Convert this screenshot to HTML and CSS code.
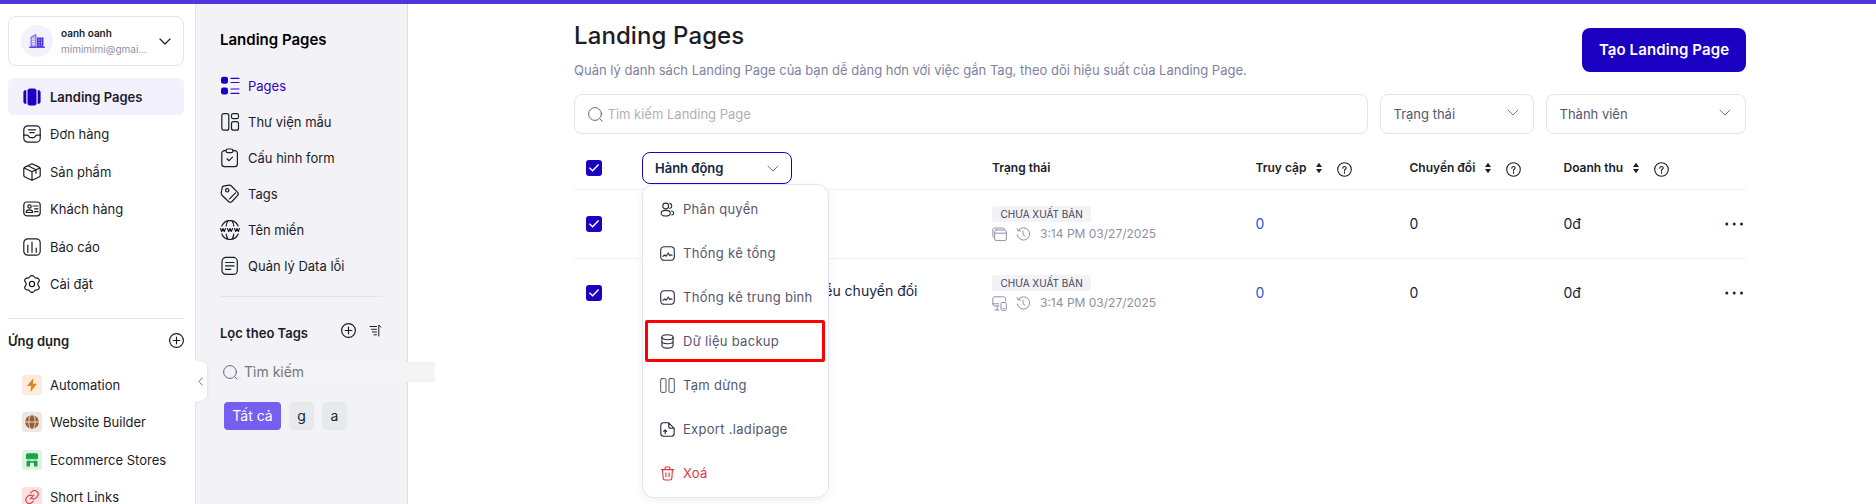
FILE: index.html
```html
<!DOCTYPE html>
<html lang="vi">
<head>
<meta charset="utf-8">
<title>Landing Pages</title>
<link rel="stylesheet" href="styles.css">
</head>
<body>
<svg class="defs" aria-hidden="true">
  <symbol id="plus" viewBox="0 0 15 15"><circle cx="7.5" cy="7.5" r="6.9"/><path d="M7.5 4.2v6.6M4.2 7.5h6.6"/></symbol>
  <symbol id="search" viewBox="0 0 15 15"><circle cx="7" cy="7" r="6.4"/><path d="M12.2 12.2l2 2"/></symbol>
  <symbol id="down" viewBox="0 0 12 7"><path d="M1 1l5 5 5-5"/></symbol>
  <symbol id="check" viewBox="0 0 16 16"><path d="M3.4 7.8l3.2 3 6-6.2"/></symbol>
  <symbol id="sort" viewBox="0 0 8 12"><path d="M4 .8L7 5H1zM4 11.2L1 7h6z"/></symbol>
  <symbol id="help" viewBox="0 0 15 15"><circle cx="7.5" cy="7.5" r="6.8"/><path d="M5.8 6.2c0-2.3 3.4-2.2 3.4-.2 0 1.200-1.700 1.300-1.700 2.500M7.500 9.900v1.200"/></symbol>
  <symbol id="chart" viewBox="0 0 15 15"><rect x=".7" y=".7" width="13.600" height="13.600" rx="3.500"/><path d="M3 10.300l1.700-1.300 1.500 1.200 2-3.200 1.600 2.700 1.200-1 1 .6"/></symbol>
  <symbol id="clock" viewBox="0 0 15 15"><path d="M2.600 3A6.200 6.200 0 1 1 1.300 8M1.200 1.600l.9 2.400 2.600-.3M7 4.200v3.500l2 1.500"/></symbol>
  <symbol id="dots" viewBox="0 0 18 4"><circle cx="1.800" cy="2" r="1.500"/><circle cx="9.200" cy="2" r="1.500"/><circle cx="16.500" cy="2" r="1.500"/></symbol>
</svg>
<div class="topbar"></div>
<div class="app">
  <aside class="sidebar">
    <div class="account">
      <span class="avatar"><svg class="building" viewBox="0 0 16 14"><path class="b1" d="M2 13V3l5-2.500V13z"/><path class="b2" d="M8 3.500h6.500V13H8z"/><path class="b3" d="M0 13.300h16"/><path class="b4" d="M3.200 5h2.500M3.200 7.500h2.500M3.200 10h2.500M9.500 6h1M12 6h1M9.500 8.500h1M12 8.500h1M9.500 11h1M12 11h1"/></svg></span>
      <div class="who"><b>oanh oanh</b><span>mimimimi@gmai...</span></div>
      <svg class="ic caret"><use href="#down"/></svg>
    </div>
    <nav class="nav">
      <a class="item active"><svg class="ic i18 solid" viewBox="0 0 18 18"><rect x="4.500" y=".4" width="9" height="17.200" rx="2.500"/><path d="M3.300 2v14C1.200 16 .4 15 .4 13.500v-9C.4 3 1.200 2 3.300 2zM14.700 2v14c2.100 0 2.900-1 2.900-2.500v-9C17.600 3 16.800 2 14.700 2z"/></svg>Landing Pages</a>
      <a class="item"><svg class="ic i18" viewBox="0 0 18 18"><rect x=".8" y=".8" width="16.400" height="16.400" rx="4"/><path d="M.8 10.200h3.400c1.400 0 1.600 2.400 3 2.400h3.600c1.400 0 1.600-2.400 3-2.400h3.400M5.500 4.800h7M6.800 7.600h4.400"/></svg>Đơn hàng</a>
      <a class="item"><svg class="ic i18" viewBox="0 0 18 18"><path d="M9 .7l7.500 3.700c.5.3.7.700.7 1.200v7c0 .5-.2.900-.7 1.100L9 17.300l-7.500-3.600c-.5-.2-.7-.6-.7-1.100v-7c0-.5.2-.9.700-1.200zM1.200 5L9 8.700 16.800 5M9 8.700v8.500M5 2.800l8 4v3.500"/></svg>Sản phẩm</a>
      <a class="item"><svg class="ic i18" viewBox="0 0 18 18"><rect x=".8" y="2" width="16.400" height="13.800" rx="3"/><circle cx="6.500" cy="6.500" r="1.700"/><path d="M3.200 12.500c0-3.500 6.500-3.500 6.500 0zM10 6h5M11.500 8.800H15M11.500 11.600H15"/></svg>Khách hàng</a>
      <a class="item"><svg class="ic i18" viewBox="0 0 18 18"><rect x=".8" y=".8" width="16.400" height="16.400" rx="4"/><path d="M4.800 7v7.300M9 4v10.300M13.200 10v4.300"/></svg>Báo cáo</a>
      <a class="item"><svg class="ic i18" viewBox="0 0 18 18"><circle cx="9" cy="9" r="2.600"/><path d="M6.800 1.700c.8-1.500 3.600-1.500 4.400 0 .5 1 1.300 1.500 2.500 1.400 1.900-.2 3.300 2 2.200 3.500-.7.900-1.100 1.400-1.100 2.400s.4 1.500 1.100 2.400c1.100 1.500-.3 3.700-2.200 3.500-1.200-.1-2 .4-2.500 1.400-.8 1.500-3.600 1.500-4.400 0-.5-1-1.300-1.500-2.500-1.400-1.900.2-3.300-2-2.200-3.500.7-.9 1.100-1.400 1.100-2.400s-.4-1.500-1.100-2.400C1 5.100 2.400 2.900 4.300 3.100c1.200.1 2-.4 2.500-1.400z"/></svg>Cài đặt</a>
    </nav>
    <div class="apps-head"><b>Ứng dụng</b><svg class="ic i15"><use href="#plus"/></svg></div>
    <nav class="nav apps">
      <a class="item"><span class="tile orange"><svg viewBox="0 0 14 14"><path d="M8.500 0L2 8h4.200L5.500 14 12 5.800H8z"/></svg></span>Automation</a>
      <a class="item"><span class="tile brown"><svg viewBox="0 0 14 14"><circle cx="7" cy="7" r="6.800"/><path class="cut" d="M0 7h14M5.500 0C3.300 4.500 3.300 9.500 5.500 14M8.500 0c2.200 4.500 2.200 9.500 0 14"/></svg></span>Website Builder</a>
      <a class="item"><span class="tile green"><svg viewBox="0 0 14 14"><path d="M2.500.3h9L13 1.300v3.500c0 2.200-2.700 2.200-3 .6-.6 1.500-2.500 1.500-3 0-.5 1.500-2.400 1.500-3 0C3.700 7 1 7 1 4.800V1.300zM1.500 7.800c1.200.4 2 .2 2.700-.5 1.800 1.300 3.800 1.300 5.600 0 .7.700 1.500.9 2.700.5V13.500H9V10.300C9 9.500 5 9.500 5 10.300V13.500H1.500z"/></svg></span>Ecommerce Stores</a>
      <a class="item"><span class="tile red"><svg viewBox="0 0 14 14"><path d="M5.800 2.800L7 1.600c3-3 8.300 1 5.300 5l-1.500 1.500c-1.200 1-2.600 1-3.800.3M8.200 11.200L7 12.400c-3 3-8.300-1-5.300-5l1.500-1.500c1.200-1 2.600-1 3.800-.3M5.200 8.800l3.600-3.600"/></svg></span>Short Links</a>
    </nav>
  </aside>
  <aside class="panel">
    <svg class="collapse" viewBox="0 0 14 46"><path class="tab" d="M0 1c5 1 12 2 12 7v28c0 5-7 6-12 7z"/><path class="arrow" d="M7.500 18.500l-3.500 4 3.500 4"/></svg>
    <h2>Landing Pages</h2>
    <nav class="subnav">
      <a class="current"><svg class="ic i20" viewBox="0 0 20 20"><rect class="fill" x="1" y=".8" width="7" height="7" rx="2.200"/><rect class="fill" x="1" y="11.500" width="7" height="7" rx="2.200"/><path d="M11 2.300h8M11 6.500h8M11 13h8M11 17.300h8"/></svg>Pages</a>
      <a><svg class="ic i20" viewBox="0 0 20 20"><rect x="1.800" y="1.700" width="7" height="16.500" rx="2"/><rect x="11.500" y="1.700" width="7" height="5" rx="1.800"/><rect x="11.500" y="9.700" width="7" height="8.500" rx="2"/></svg>Thư viện mẫu</a>
      <a><svg class="ic i20" viewBox="0 0 20 20"><path d="M6 2.700H4.500c-1.700 0-2.700 1-2.700 2.700v10.500c0 1.700 1 2.700 2.700 2.700h10.200c1.700 0 2.700-1 2.700-2.700V5.400c0-1.700-1-2.700-2.700-2.700H13"/><rect x="6" y="1" width="7" height="3.600" rx="1.500"/><path d="M7 10.800l2 1.900 3.500-3.500"/></svg>Cấu hình form</a>
      <a><svg class="ic i20" viewBox="0 0 20 20"><path d="M3.500 2.200L9 1.200c1-.1 1.700.1 2.400.8l6.200 6.300c1 1 1 2 0 3l-5.600 6.200c-1 1-2.500 1-3.500 0L2 11.200C1.200 10.400 1 9.500 1.300 8.500L2.200 3.500c.2-.8.5-1.100 1.300-1.300z"/><circle cx="7.200" cy="6.300" r="1.700"/><path d="M9.500 14.800l6-6"/></svg>Tags</a>
      <a><svg class="ic i20" viewBox="0 0 20 20"><path d="M1.800 6C5 -1.300 15 -1.300 18.200 6M1.800 14C5 21.300 15 21.300 18.200 14M8 1C7 2.500 6.300 4 6.200 6M12 1c1 1.500 1.700 3 1.800 5M8 19c-1-1.500-1.700-3-1.800-5M12 19c1-1.500 1.700-3 1.800-5"/><path d="M.5 8.500l1.200 3L3 8.500l1.300 3 1.200-3M7.500 8.500l1.200 3L10 8.500l1.300 3 1.200-3M14.500 8.500l1.200 3L17 8.500l1.300 3 1.200-3"/></svg>Tên miền</a>
      <a><svg class="ic i20" viewBox="0 0 20 20"><rect x="2" y="1.400" width="15.300" height="17" rx="4"/><path d="M5.500 6.500h8.500M5.500 9.900h8.500M5.500 13.300h5.300"/></svg>Quản lý Data lỗi</a>
    </nav>
    <div class="filter-head"><b>Lọc theo Tags</b><svg class="ic i15"><use href="#plus"/></svg><svg class="ic sorter" viewBox="0 0 13 13"><path d="M1 2.500h6.500M2.500 5.300h5M3.500 8h4M5 10.800h2.500M9.800 12V1l2 2.200"/></svg></div>
    <label class="tag-search"><svg class="ic i15 thin"><use href="#search"/></svg><span>Tìm kiếm</span></label>
    <div class="tags"><span class="tag on">Tất cả</span><span class="tag">g</span><span class="tag">a</span></div>
  </aside>
  <main class="main">
    <header class="page-head">
      <div><h1>Landing Pages</h1><p>Quản lý danh sách Landing Page của bạn dễ dàng hơn với việc gắn Tag, theo dõi hiệu suất của Landing Page.</p></div>
      <button class="create">Tạo Landing Page</button>
    </header>
    <div class="filters">
      <div class="field search"><svg class="ic i15 thin"><use href="#search"/></svg>Tìm kiếm Landing Page</div>
      <div class="field status">Trạng thái<svg class="ic chev"><use href="#down"/></svg></div>
      <div class="field">Thành viên<svg class="ic chev"><use href="#down"/></svg></div>
    </div>
    <div class="row head">
      <span class="cell-check"><svg class="box"><use href="#check"/></svg></span>
      <div class="action">
        <div class="action-btn">Hành động<svg class="ic chev"><use href="#down"/></svg></div>
        <div class="menu">
          <a><svg class="ic i15" viewBox="0 0 15 15"><circle cx="5.700" cy="4" r="2.900"/><ellipse cx="5.700" cy="11.200" rx="4.600" ry="2.800"/><path d="M9.800 1.400c2.600.6 2.600 4.400 0 5M11.500 9c2.900.5 2.900 3.300.3 4"/></svg>Phân quyền</a>
          <a><svg class="ic i15"><use href="#chart"/></svg>Thống kê tổng</a>
          <a><svg class="ic i15"><use href="#chart"/></svg>Thống kê trung bình</a>
          <a class="marked"><svg class="ic i15" viewBox="0 0 15 15"><ellipse cx="7.500" cy="3.200" rx="5.600" ry="2.500"/><path d="M1.900 3.200v8.400c0 3.400 11.200 3.400 11.200 0V3.200M1.900 7.300c0 3.300 11.200 3.300 11.200 0"/></svg>Dữ liệu backup</a>
          <a><svg class="ic i15 pause" viewBox="0 0 15 15"><rect x=".7" y=".6" width="5.300" height="13.800" rx="1.200"/><rect x="9" y=".6" width="5.300" height="13.800" rx="1.200"/></svg>Tạm dừng</a>
          <a><svg class="ic i15" viewBox="0 0 15 15"><path d="M8.700.8H3.500C1.700.8.800 1.800.8 3.500v8c0 1.700.9 2.700 2.700 2.700h8c1.700 0 2.700-1 2.700-2.700V6.300zM8.700.8v3.500c0 1.300.7 2 2 2h3.500M5.200 11.700V8M3.700 9.300L5.200 7.900l1.500 1.400"/></svg>Export .ladipage</a>
          <a class="danger"><svg class="ic i15" viewBox="0 0 15 15"><path d="M1.300 3.600h12.400M4.800 3.400L5.500 1h4l.7 2.400M2.600 3.800l.5 8.200c.1 1.400.9 2 2 2h4.800c1.100 0 1.900-.6 2-2l.5-8.200M5.900 6.800v4M9.100 6.800v4"/></svg>Xoá</a>
        </div>
      </div>
      <span class="th">Trạng thái</span>
      <span class="th">Truy cập<svg class="sort"><use href="#sort"/></svg><svg class="ic i15 help"><use href="#help"/></svg></span>
      <span class="th">Chuyển đổi<svg class="sort"><use href="#sort"/></svg><svg class="ic i15 help"><use href="#help"/></svg></span>
      <span class="th">Doanh thu<svg class="sort"><use href="#sort"/></svg><svg class="ic i15 help"><use href="#help"/></svg></span>
    </div>
    <div class="row">
      <span class="cell-check"><svg class="box"><use href="#check"/></svg></span>
      <span class="name"></span>
      <div class="state"><span class="badge">CHƯA XUẤT BẢN</span><span class="meta"><svg class="ic i15" viewBox="0 0 15 15"><path d="M2 10.500C1.100 10.300.8 9.800.8 8.800V3C.8 1.700 1.500 1 2.800 1h7.700c1 0 1.700.4 2 1.200"/><rect x="2.700" y="3" width="11.600" height="10.600" rx="1.500"/><path d="M2.700 6.200h11.600"/></svg><svg class="ic i15"><use href="#clock"/></svg>3:14 PM 03/27/2025</span></div>
      <span class="num link">0</span><span class="num">0</span><span class="num">0đ</span>
      <svg class="dots"><use href="#dots"/></svg>
    </div>
    <div class="row last">
      <span class="cell-check"><svg class="box"><use href="#check"/></svg></span>
      <span class="name">iểu chuyển đổi</span>
      <div class="state"><span class="badge">CHƯA XUẤT BẢN</span><span class="meta"><svg class="ic i15" viewBox="0 0 15 15"><path d="M7 10H3C1.600 10 .8 9.200.8 8V3C.8 1.600 1.600.8 3 .8h8.500c1.400 0 2.200.8 2.200 2.200v1.500M.8 7.800h6M5.200 10v3.800M3 14h4"/><rect x="9" y="6.500" width="5.300" height="7.800" rx="1.200"/><path d="M11.200 12.500h1"/></svg><svg class="ic i15"><use href="#clock"/></svg>3:14 PM 03/27/2025</span></div>
      <span class="num link">0</span><span class="num">0</span><span class="num">0đ</span>
      <svg class="dots"><use href="#dots"/></svg>
    </div>
  </main>
</div>
</body>
</html>
```
FILE: styles.css
```css
* { box-sizing: border-box; }
body { margin: 0; height: 504px; overflow: hidden; background: #fff; color: #1c1c28; font: 13px/20px Inter, "Noto Sans", sans-serif; }
h1, h2, p { margin: 0; }
b { font-weight: 600; }
.defs { position: absolute; width: 0; height: 0; }
.topbar { height: 4px; background: #4f35dc; }
.app { display: flex; height: 500px; }
.ic { flex: none; fill: none; stroke: currentColor; stroke-width: 1.2; stroke-linecap: round; stroke-linejoin: round; }
.i15 { width: 15px; height: 15px; }
.i18 { width: 18px; height: 18px; }
.i20 { width: 20px; height: 20px; }
.thin { stroke-width: .9; color: #555770; }
.solid, .fill { fill: #1c00c2; stroke: none; }

.sidebar { width: 196px; flex: none; padding: 12px 11px 0 8px; border-right: 1px solid #e4e4eb; }
.account { display: flex; align-items: center; height: 50px; padding: 0 12px; border: 1px solid #e4e4f0; border-radius: 8px; }
.avatar { display: grid; place-items: center; width: 32px; height: 32px; border-radius: 50%; background: #f3f1fe; }
.building { width: 16px; height: 14px; fill: none; }
.b1 { fill: #b9aef7; stroke: #5f45e6; stroke-width: .8; }
.b2 { fill: #5236df; }
.b3 { stroke: #4528d8; stroke-width: 1; }
.b4 { stroke: #fff; stroke-width: .9; }
.who { display: flex; flex-direction: column; flex: 1; margin-left: 8px; font-size: 10px; line-height: 16px; }
.who span { color: #8f90a6; white-space: nowrap; }
.caret { width: 12px; height: 7px; }
.nav { display: flex; flex-direction: column; gap: .5px; margin-top: 12px; }
.item { display: flex; align-items: center; gap: 9px; height: 37px; padding-left: 15px; border-radius: 6px; white-space: nowrap; }
.active { background: #f3f1fe; font-weight: 600; }
.apps-head { display: flex; align-items: center; justify-content: space-between; margin-top: 15.5px; border-top: 1px solid #e4e4eb; height: 44px; }
.apps { margin-top: 4px; }
.apps .item { gap: 8px; padding-left: 14px; }
.tile { display: grid; place-items: center; width: 20px; height: 20px; border-radius: 3px; }
.tile svg { width: 14px; height: 14px; }
.orange { background: #fbecdc; fill: #dc8420; }
.brown { background: #efe6e0; fill: #935f35; }
.cut { fill: none; stroke: #efe6e0; stroke-width: .9; }
.green { background: #dcf3e4; fill: #1ba345; }
.red { background: #f9e0e1; fill: none; stroke: #d2434b; stroke-width: 1.1; stroke-linecap: round; }

.panel { position: relative; width: 212px; flex: none; padding: 25px 24px 0; background: #f2f2f7; border-right: 1px solid #dddde5; }
.collapse { position: absolute; left: -1px; top: 355px; width: 14px; height: 46px; fill: none; filter: drop-shadow(1px 0 1px #0001); }
.tab { fill: #fff; }
.arrow { stroke: #77778a; stroke-width: 1; }
h2 { font-size: 15px; font-weight: 600; line-height: 22px; color: #000; }
.subnav { display: flex; flex-direction: column; margin-top: 17px; padding-bottom: 12px; border-bottom: 1px solid #e4e4eb; }
.subnav a { display: flex; align-items: center; gap: 8px; height: 36px; white-space: nowrap; }
.subnav .current { color: #3300c9; }
.filter-head { display: flex; align-items: center; height: 20px; margin-top: 26px; white-space: nowrap; }
.filter-head .i15 { margin: -6px 0 0 auto; }
.sorter { width: 13px; height: 13px; margin: -5px 1px 0 13px; stroke-width: 1; }
.tag-search { display: flex; align-items: center; width: 215px; height: 20px; margin-top: 19px; padding-left: 3px; font-size: 14px; color: #777; }
.tag-search span { flex: 1; height: 20px; margin-left: 4px; padding-left: 2px; background: #f3f4f6; }
.tags { display: flex; gap: 8px; margin: 20px 0 0 4px; font-size: 14px; }
.tag { height: 28px; padding: 4px 8.3px; border-radius: 4px; background: #e7e9eb; color: #12263f; line-height: 20px; white-space: nowrap; }
.tag.on { background: #765eef; color: #fff; }

.main { width: 1172px; margin-left: 166px; padding-top: 17px; }
.page-head { display: flex; justify-content: space-between; height: 73px; }
h1 { font-size: 24px; font-weight: 500; line-height: 30px; letter-spacing: .1px; }
.page-head p { margin-top: 9px; line-height: 20px; color: #8082a0; white-space: nowrap; }
.create { width: 164px; height: 44px; margin-top: 7px; padding: 0 0 1px; border: 0; border-radius: 8px; background: #1c00c2; color: #fff; font: 600 15px Inter, sans-serif; letter-spacing: .1px; white-space: nowrap; }
.filters { display: grid; grid-template-columns: 794px 154px 200px; gap: 12px; }
.field { display: flex; align-items: center; justify-content: space-between; height: 40px; padding: 0 14px 0 12.5px; border: 1px solid #e4e4f0; border-radius: 8px; color: #555770; }
.field.search { justify-content: flex-start; gap: 5px; color: #b0b0b4; }
.chev { width: 12px; height: 7px; stroke-width: 1; color: #77778a; }
.field .chev { margin-top: -4px; }
.row { display: grid; grid-template-columns: 68px 350px 263.5px 154px 154px 161.5px 21px; align-items: center; height: 69px; border-bottom: 1px solid #f1f1f4; color: #12263f; }
.row.head { height: 56px; }
.row.last { border: 0; height: 68px; }
.cell-check { padding-left: 12px; line-height: 0; }
.head .cell-check { margin-top: 13px; }
.box { width: 16px; height: 16px; border-radius: 3px; background: #1c00c2; fill: none; stroke: #fff; stroke-width: 1.5; }
.action { position: relative; margin-top: 13px; }
.action-btn { display: flex; align-items: center; justify-content: space-between; width: 150px; height: 32px; padding: 0 12px; border: 1px solid #1c00c2; border-radius: 8px; font-weight: 600; }
.menu { position: absolute; z-index: 2; top: 32px; left: 0; width: 187px; height: 314px; padding: 3px 2px 0; border: 1px solid #e4e4f0; border-radius: 12px; background: #fff; box-shadow: 0 3px 8px #28293d10; color: #555770; letter-spacing: .3px; }
.menu a { display: flex; align-items: center; gap: 8px; height: 42px; margin-bottom: 2px; padding-left: 15px; white-space: nowrap; }
.menu .ic { color: #28293d; stroke-width: 1.1; }
.menu .pause { stroke-width: .8; }
.menu .marked { width: 180px; padding-left: 12px; border: 3px solid #f00; border-radius: 2px; }
.menu .danger, .menu .danger .ic { color: #e0353b; }
.th { display: flex; align-items: center; margin-top: 13px; font-size: 12px; font-weight: 600; color: #1c1c28; white-space: nowrap; }
.sort { width: 8px; height: 12px; margin-left: 8.5px; fill: #1c1c28; }
.help { margin: 2px 0 0 14px; stroke-width: 1.1; }
.name { width: 275.5px; font-size: 14px; text-align: right; margin-top: -4px; }
.state { display: flex; flex-direction: column; align-items: flex-start; padding-top: 2px; }
.badge { height: 16px; padding: 0 8.5px; border-radius: 3px; background: #f2f2f7; color: #444560; font-size: 10px; line-height: 17px; white-space: nowrap; }
.meta { display: flex; align-items: center; gap: 9px; margin-top: 2px; color: #8f90a6; font-size: 12px; white-space: nowrap; }
.meta .ic { stroke-width: 1; }
.num { font-size: 14px; }
.link { color: #3056d3; }
.dots { width: 18px; height: 4px; fill: #12263f; }
```
